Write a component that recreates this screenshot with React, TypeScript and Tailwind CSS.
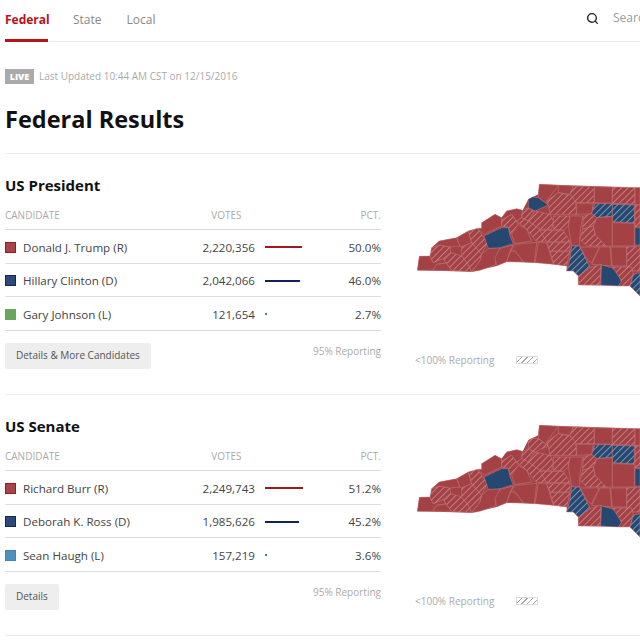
import { Search } from "lucide-react";

type Fill = "r" | "h" | "b" | "bh";
type County = [Fill, string];

// coordinates are in 3x map units (viewBox 720 wide, drawn at 240px)
const counties: County[] = [
  ["r", "52,298 58,256 90,255 100,275 130,262 138,275 110,280 98,298"],
  ["r", "98,298 110,280 138,276 155,298"],
  ["h", "90,255 95,230 118,222 150,228 152,245 130,262 100,275"],
  ["h", "138,275 130,262 152,245 185,255 205,280 215,302 155,298"],
  ["r", "95,230 118,210 170,200 180,225 150,228 118,222"],
  ["r", "170,200 205,180 215,215 185,228 180,225"],
  ["h", "185,228 215,215 245,250 240,270 215,302 205,280 185,255"],
  ["h", "205,180 232,172 262,215 245,250 215,215"],
  ["r", "245,172 245,155 285,130 305,140 305,165 252,190 232,172"],
  ["r", "265,232 300,230 285,282 240,298 215,302 240,270 245,250"],
  ["r", "300,232 340,222 330,240 320,272 290,284 285,260"],
  ["r", "305,140 320,120 350,113 368,118 365,140 350,150 335,130 305,148"],
  ["h", "305,148 335,130 355,160 330,190 325,168 305,165"],
  ["r", "355,160 380,175 395,210 345,218 335,190"],
  ["r", "345,220 410,214 403,275 370,273 345,240 332,240"],
  ["r", "332,240 345,240 370,273 320,272"],
  ["h", "368,118 385,110 405,120 385,150 365,140"],
  ["h", "405,120 450,130 460,150 455,175 420,175 385,150"],
  ["h", "385,150 420,175 440,210 410,212 380,175 350,150 365,140"],
  ["h", "460,135 510,135 505,165 490,178 460,175"],
  ["h", "420,178 490,178 510,212 440,212"],
  ["r", "415,215 440,215 460,280 405,275"],
  ["h", "440,215 510,215 510,240 450,240"],
  ["h", "450,242 510,242 500,285 462,280"],
  ["r", "415,70 418,40 475,43 440,90 445,102 415,80"],
  ["r", "475,43 520,45 510,70 475,65"],
  ["h", "445,102 440,90 475,65 525,75 530,130 450,130"],
  ["h", "520,45 583,47 583,95 530,95 510,70"],
  ["r", "583,47 637,48 637,97 583,95"],
  ["h", "637,48 705,50 705,100 637,97"],
  ["r", "705,50 720,50 720,100 705,100"],
  ["r", "530,97 580,97 575,128 530,130"],
  ["bh", "585,98 637,98 637,135 590,140 575,128"],
  ["bh", "637,100 703,102 703,155 637,152"],
  ["h", "705,102 720,102 720,168 705,168"],
  ["r", "590,140 637,137 637,225 610,225 585,190 580,165"],
  ["r", "637,155 703,157 703,225 637,225"],
  ["b", "705,170 720,170 720,222 705,222"],
  ["r", "510,135 548,135 540,185 538,225 515,225 505,165"],
  ["h", "550,135 575,128 590,140 580,165 548,175"],
  ["h", "548,175 580,165 585,190 618,225 560,225 540,205"],
  ["bh", "515,225 538,225 570,290 535,315 520,300 500,300 510,265"],
  ["r", "540,228 598,228 575,275 565,270"],
  ["r", "600,228 630,228 635,285 575,280"],
  ["r", "632,228 680,228 680,285 637,285"],
  ["h", "680,228 720,225 720,300 695,300 680,285"],
  ["h", "535,315 570,290 603,280 600,342 535,342"],
  ["b", "605,282 635,290 650,298 665,335 655,345 602,342"],
  ["h", "637,288 695,288 700,310 690,345 655,345 665,330"],
  ["bh", "700,310 720,305 720,375 690,345"],
  ["b", "252,195 305,170 325,170 330,195 340,218 300,230 265,232"],
];

const outline =
  "52,298 58,256 90,255 95,230 118,210 170,200 205,180 245,172 245,155 285,130 305,140 320,120 350,113 368,118 385,85 398,78 415,70 418,40 720,50 720,375 690,345 535,342 535,315 520,300 500,300 500,285 420,275 320,272 290,285 215,302";

function NcMap({ id, fipsHatchBlue }: { id: string; fipsHatchBlue: boolean }) {
  const fills: Record<Fill, string> = {
    r: "#a34145",
    b: "#26476f",
    h: `url(#${id}-red)`,
    bh: `url(#${id}-blue)`,
  };
  return (
    <svg viewBox="0 0 720 525" className="block h-[175px] w-[240px]">
      <defs>
        <pattern id={`${id}-red`} width="14" height="14" patternUnits="userSpaceOnUse" patternTransform="rotate(45)">
          <rect width="14" height="14" fill="#a34145" />
          <rect width="3" height="14" fill="#c27c80" />
        </pattern>
        <pattern id={`${id}-blue`} width="14" height="14" patternUnits="userSpaceOnUse" patternTransform="rotate(45)">
          <rect width="14" height="14" fill="#26476f" />
          <rect width="3" height="14" fill="#7d95b0" />
        </pattern>
      </defs>
      <polygon points={outline} fill="#a34145" />
      {counties.map(([f, pts], i) => (
        <polygon key={i} points={pts} fill={fills[f]} stroke="#c47f83" strokeWidth="1.5" strokeLinejoin="round" />
      ))}
      <polygon
        points="385,85 398,78 415,80 445,102 405,120 385,110"
        fill={fipsHatchBlue ? fills.b : fills.h}
        stroke="#c47f83"
        strokeWidth="1.5"
      />
    </svg>
  );
}

type Row = { name: string; votes: string; pct: string; color: string; edge: string; bar: number; barColor: string };

const presRows: Row[] = [
  { name: "Donald J. Trump (R)", votes: "2,220,356", pct: "50.0%", color: "#a84348", edge: "#a3181d", bar: 37, barColor: "#a3181d" },
  { name: "Hillary Clinton (D)", votes: "2,042,066", pct: "46.0%", color: "#2b4a78", edge: "#12285c", bar: 35, barColor: "#12205c" },
  { name: "Gary Johnson (L)", votes: "121,654", pct: "2.7%", color: "#66a65f", edge: "#66a65f", bar: 2, barColor: "#3f9a3f" },
];

const senRows: Row[] = [
  { name: "Richard Burr (R)", votes: "2,249,743", pct: "51.2%", color: "#a84348", edge: "#a3181d", bar: 38, barColor: "#a3181d" },
  { name: "Deborah K. Ross (D)", votes: "1,985,626", pct: "45.2%", color: "#2b4a78", edge: "#12285c", bar: 34, barColor: "#12205c" },
  { name: "Sean Haugh (L)", votes: "157,219", pct: "3.6%", color: "#4f90bf", edge: "#3c86b8", bar: 2, barColor: "#2f7db0" },
];

function Race({ title, rows, button, id, blue }: { title: string; rows: Row[]; button: string; id: string; blue: boolean }) {
  return (
    <section className="flex h-[241px] border-b border-[#ececec]">
      <div className="w-[376px] shrink-0">
        <h2 className="mt-[21px] text-[15px] leading-[20px] font-bold text-[#111]">{title}</h2>
        <div className="mt-[10px] flex h-[25px] items-start border-b border-[#ddd] text-[10px] leading-[20px] text-[#aaa]">
          <span className="flex-1">CANDIDATE</span>
          <span className="mr-[119px]">VOTES</span>
          <span>PCT.</span>
        </div>
        {rows.map((r) => (
          <div key={r.name} className="flex h-[33.5px] items-center border-b border-[#ddd] pt-[2px] text-[11.6px] text-[#444]">
            <span
              className="mr-[7px] h-[11px] w-[11px] shrink-0 border"
              style={{ backgroundColor: r.color, borderColor: r.edge }}
            />
            <span className="w-[142px] whitespace-nowrap">{r.name}</span>
            <span className="w-[90px] text-right">{r.votes}</span>
            <span className="ml-[10px] w-[60px]">
              <span className="block h-[2px]" style={{ width: r.bar, backgroundColor: r.barColor }} />
            </span>
            <span className="flex-1 text-right">{r.pct}</span>
          </div>
        ))}
        <div className="mt-[12px] flex items-start justify-between">
          <button className="h-[26px] rounded-[2px] bg-[#eeeeee] px-[11px] text-[10px] text-[#555]">{button}</button>
          <span className="text-[10px] leading-[16px] text-[#aaa]">95% Reporting</span>
        </div>
      </div>
      <div className="ml-[19px] w-[240px] shrink-0 pt-[17px]">
        <NcMap id={id} fipsHatchBlue={blue} />
        <div className="mt-[6px] flex items-center pl-[15px] text-[10px] leading-[16px] text-[#aaa]">
          <span>&lt;100% Reporting</span>
          <span className="ml-[22px] h-[8px] w-[22px] border border-[#ddd] bg-[repeating-linear-gradient(135deg,#fff_0px,#fff_3px,#aaa_3px,#aaa_4px)]" />
        </div>
      </div>
    </section>
  );
}

export default function App() {
  return (
    <div className="h-[640px] w-[640px] overflow-hidden bg-white pl-[5px] font-['Open_Sans',sans-serif]">
      <nav className="flex h-[42px] items-start border-b border-[#ececec] text-[12px]">
        <a className="flex h-[42px] w-[43px] items-center border-b-[3px] border-[#b8121b] pt-[1px] font-bold text-[#b8121b]">Federal</a>
        <a className="ml-[25px] flex h-[39px] items-center pt-[1px] text-[#888]">State</a>
        <a className="ml-[25px] flex h-[39px] items-center pt-[1px] text-[#888]">Local</a>
        <div className="ml-auto flex h-[36px] w-[54px] shrink-0 items-center overflow-hidden whitespace-nowrap text-[#999]">
          <Search size={13} strokeWidth={2.5} className="mr-[14px] shrink-0 text-[#222]" />
          Search
        </div>
      </nav>
      <div className="mt-[27px] flex h-[15px] items-center text-[10px] text-[#aaa]">
        <span className="mr-[5px] flex h-[15px] w-[29px] items-center justify-center bg-[#aaa] text-[9px] font-extrabold text-white">LIVE</span>
        Last Updated 10:44 AM CST on 12/15/2016
      </div>
      <h1 className="mt-[17px] text-[23.5px] leading-[36px] font-bold text-[#111]">Federal Results</h1>
      <div className="mt-[16px] border-b border-[#ececec]" />
      <Race title="US President" rows={presRows} button="Details & More Candidates" id="pres" blue />
      <Race title="US Senate" rows={senRows} button="Details" id="sen" blue={false} />
    </div>
  );
}
